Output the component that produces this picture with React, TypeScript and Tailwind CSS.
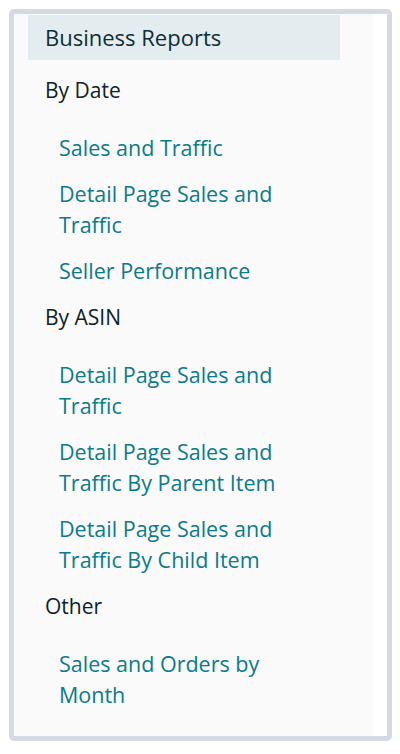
import React from "react";

const sections = [
  {
    title: "By Date",
    links: ["Sales and Traffic", "Detail Page Sales and Traffic", "Seller Performance"],
  },
  {
    title: "By ASIN",
    links: [
      "Detail Page Sales and Traffic",
      "Detail Page Sales and Traffic By Parent Item",
      "Detail Page Sales and Traffic By Child Item",
    ],
  },
  {
    title: "Other",
    links: ["Sales and Orders by Month"],
  },
];

const App = () => {
  return (
    <div
      className="w-[400px] h-[754px] bg-white pt-[9px] pl-[9px]"
      style={{ fontFamily: '"Open Sans", "Noto Sans", sans-serif' }}
    >
      <div className="w-[383px] h-[732px] rounded-[5px] border-[5px] border-[#d5d9e1] bg-white flex">
        <nav className="w-[359px] h-full bg-[#fafafa] pt-px">
          <div className="ml-[14px] w-[312px] h-[45px] bg-[#e3ecee] pl-[17px] flex items-center text-[22px] text-[#0f2d36]">
            Business Reports
          </div>
          <div className="mt-[15px] flex flex-col gap-4">
            {sections.map((s) => (
              <div key={s.title}>
                <div className="pl-[31px] text-[21px] leading-[31px] text-[#0c2228] mb-[26px]">
                  {s.title}
                </div>
                <ul className="flex flex-col gap-[15px] pl-[45px] pr-[74px]">
                  {s.links.map((l, i) => (
                    <li key={i} className="text-[21.5px] leading-[31px] text-[#0a7b8b]">
                      <a href="#">{l}</a>
                    </li>
                  ))}
                </ul>
              </div>
            ))}
          </div>
        </nav>
      </div>
    </div>
  );
};

export default App;
